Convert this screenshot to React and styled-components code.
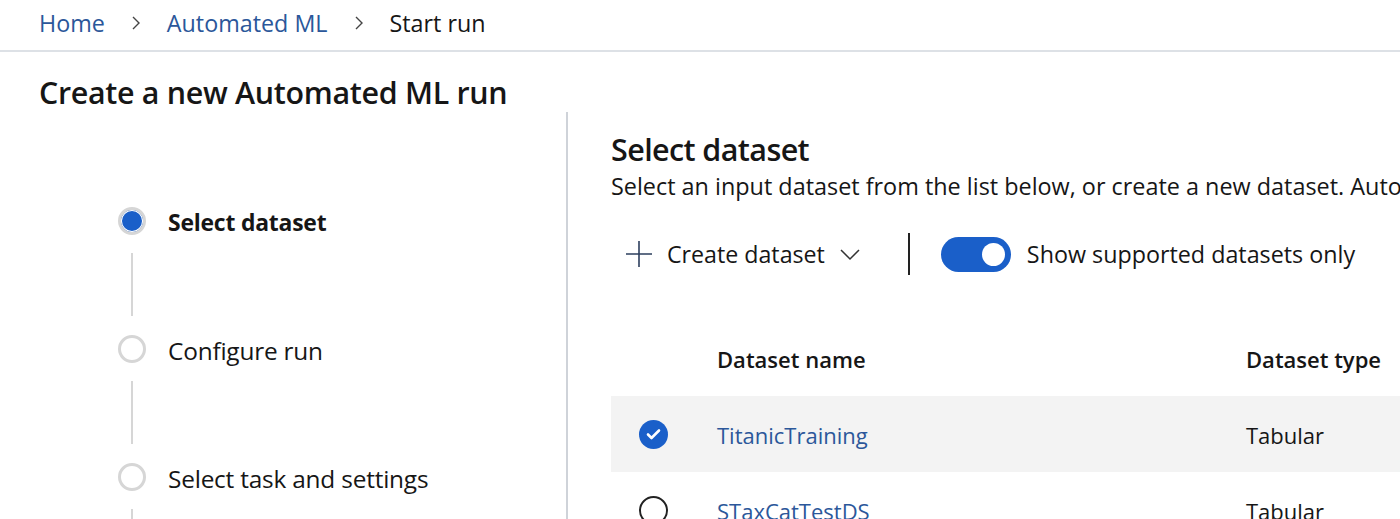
import React from "react";
import styled, { createGlobalStyle } from "styled-components";

const Global = createGlobalStyle`
  html, body { margin: 0; padding: 0; background: #fff; }
  body { font-family: "Open Sans", "Noto Sans", sans-serif; color: #161616; overflow: hidden; }
  * { box-sizing: border-box; }
`;

const Page = styled.div`
  width: 1400px;
  height: 519px;
  overflow: hidden;
  display: flex;
  flex-direction: column;
`;

const Breadcrumb = styled.nav`
  height: 52px;
  border-bottom: 2px solid #dde1e6;
  display: flex;
  align-items: center;
  padding: 0 0 4px 39px;
  font-size: 23.3px;
  gap: 25px;
`;

const Crumb = styled.span`
  color: ${(p) => (p.$current ? "#161616" : "#2b579a")};
`;

const Sep = styled.span`
  display: flex;
  align-items: center;
`;

const Title = styled.h1`
  margin: 0;
  padding: 22px 0 0 39px;
  height: 60px;
  font-size: 30.4px;
  line-height: 38px;
  font-weight: 600;
  letter-spacing: -0.3px;
  white-space: nowrap;
`;

const Main = styled.div`
  flex: 1;
  display: flex;
  min-height: 0;
`;

const Left = styled.div`
  width: 568px;
  border-right: 2px solid #cfd3d9;
  padding: 95px 0 0 118px;
  flex-shrink: 0;
`;

const Step = styled.div`
  display: flex;
  align-items: center;
  height: 28px;
  gap: 22px;
`;

const StepDot = styled.span`
  width: 28px;
  height: 28px;
  border-radius: 50%;
  border: 3px solid #d6d6d6;
  background: ${(p) => (p.$active ? "#1a5fc9" : "#fff")};
  box-shadow: ${(p) => (p.$active ? "inset 0 0 0 1px #fff" : "none")};
  flex-shrink: 0;
`;

const StepLabel = styled.span`
  font-size: ${(p) => (p.$active ? "22.9px" : "24.4px")};
  font-weight: ${(p) => (p.$active ? 700 : 400)};
  letter-spacing: -0.2px;
  line-height: 28px;
  padding-top: 3px;
  white-space: nowrap;
`;

const Connector = styled.div`
  width: 2px;
  height: 63px;
  background: #d6d6d6;
  margin: 18px 0 19px 13px;
`;

const Right = styled.div`
  flex: 1;
  padding: 18px 0 0 43px;
  min-width: 0;
`;

const H2 = styled.h2`
  margin: 0;
  font-size: 30.5px;
  line-height: 38px;
  font-weight: 600;
  letter-spacing: -0.6px;
  white-space: nowrap;
`;

const Sub = styled.p`
  margin: 3px 0 0;
  font-size: 23.4px;
  line-height: 30px;
  white-space: nowrap;
`;

const Toolbar = styled.div`
  margin-top: 31px;
  height: 44px;
  display: flex;
  align-items: center;
`;

const CmdButton = styled.button`
  all: unset;
  display: flex;
  align-items: center;
  padding-left: 14px;
  font-size: 23.2px;
  color: #161616;
  gap: 14px;
`;

const Divider = styled.span`
  width: 2px;
  height: 42px;
  background: #222;
  margin: 0 31px 0 47px;
`;

const ToggleTrack = styled.span`
  width: 70px;
  height: 35px;
  border-radius: 18px;
  background: #1a5fc9;
  display: flex;
  align-items: center;
  justify-content: flex-end;
  padding-right: 6px;
`;

const Knob = styled.span`
  width: 23px;
  height: 23px;
  border-radius: 50%;
  background: #fff;
`;

const ToggleLabel = styled.span`
  margin-left: 16px;
  font-size: 23.3px;
  white-space: nowrap;
`;

const Table = styled.div`
  margin-top: 44px;
  width: 789px;
`;

const Row = styled.div`
  display: grid;
  grid-template-columns: 106px 529px 1fr;
  align-items: center;
  height: 76px;
  background: ${(p) => (p.$selected ? "#f3f3f3" : "transparent")};
  font-size: 22px;
  white-space: nowrap;
`;

const HeadCell = styled.span`
  font-weight: 600;
  padding-top: 1px;
`;

const Cell = styled.span`
  color: ${(p) => (p.$link ? "#2b579a" : "#161616")};
  padding-top: 1px;
`;

const CheckCell = styled.span`
  padding-left: 28px;
  display: flex;
  align-items: center;
`;

const Radio = styled.span`
  width: 29px;
  height: 29px;
  border-radius: 50%;
  display: flex;
  align-items: center;
  justify-content: center;
  background: ${(p) => (p.$checked ? "#1a5fc9" : "#fff")};
  border: ${(p) => (p.$checked ? "none" : "2px solid #222")};
`;

const Chevron = () => (
  <svg width="12" height="18" viewBox="0 0 12 18">
    <path d="M3 3l6 6-6 6" fill="none" stroke="#444" strokeWidth="1.4" />
  </svg>
);

export default function App() {
  return (
    <Page>
      <Global />
      <Breadcrumb>
        <Crumb>Home</Crumb>
        <Sep><Chevron /></Sep>
        <Crumb>Automated ML</Crumb>
        <Sep><Chevron /></Sep>
        <Crumb $current>Start run</Crumb>
      </Breadcrumb>
      <Title>Create a new Automated ML run</Title>
      <Main>
        <Left>
          <Step>
            <StepDot $active />
            <StepLabel $active>Select dataset</StepLabel>
          </Step>
          <Connector />
          <Step>
            <StepDot />
            <StepLabel>Configure run</StepLabel>
          </Step>
          <Connector />
          <Step>
            <StepDot />
            <StepLabel>Select task and settings</StepLabel>
          </Step>
          <Connector />
        </Left>
        <Right>
          <H2>Select dataset</H2>
          <Sub>Select an input dataset from the list below, or create a new dataset. Automated ML supports tabular datasets only.</Sub>
          <Toolbar>
            <CmdButton>
              <svg width="28" height="28" viewBox="0 0 28 28">
                <path d="M14 1v26M1 14h26" stroke="#2d3f5e" strokeWidth="1.6" fill="none" />
              </svg>
              <span>Create dataset</span>
              <svg width="22" height="14" viewBox="0 0 22 14">
                <path d="M2 3l9 9 9-9" fill="none" stroke="#333" strokeWidth="1.5" />
              </svg>
            </CmdButton>
            <Divider />
            <ToggleTrack>
              <Knob />
            </ToggleTrack>
            <ToggleLabel>Show supported datasets only</ToggleLabel>
          </Toolbar>
          <Table>
            <Row>
              <span />
              <HeadCell>Dataset name</HeadCell>
              <HeadCell>Dataset type</HeadCell>
            </Row>
            <Row $selected>
              <CheckCell>
                <Radio $checked>
                  <svg width="15" height="12" viewBox="0 0 15 12">
                    <path d="M2 6.5l3.5 3.5L13 2.5" fill="none" stroke="#fff" strokeWidth="2.6" strokeLinecap="round" strokeLinejoin="round" />
                  </svg>
                </Radio>
              </CheckCell>
              <Cell $link>TitanicTraining</Cell>
              <Cell>Tabular</Cell>
            </Row>
            <Row>
              <CheckCell>
                <Radio />
              </CheckCell>
              <Cell $link>STaxCatTestDS</Cell>
              <Cell>Tabular</Cell>
            </Row>
          </Table>
        </Right>
      </Main>
    </Page>
  );
}
